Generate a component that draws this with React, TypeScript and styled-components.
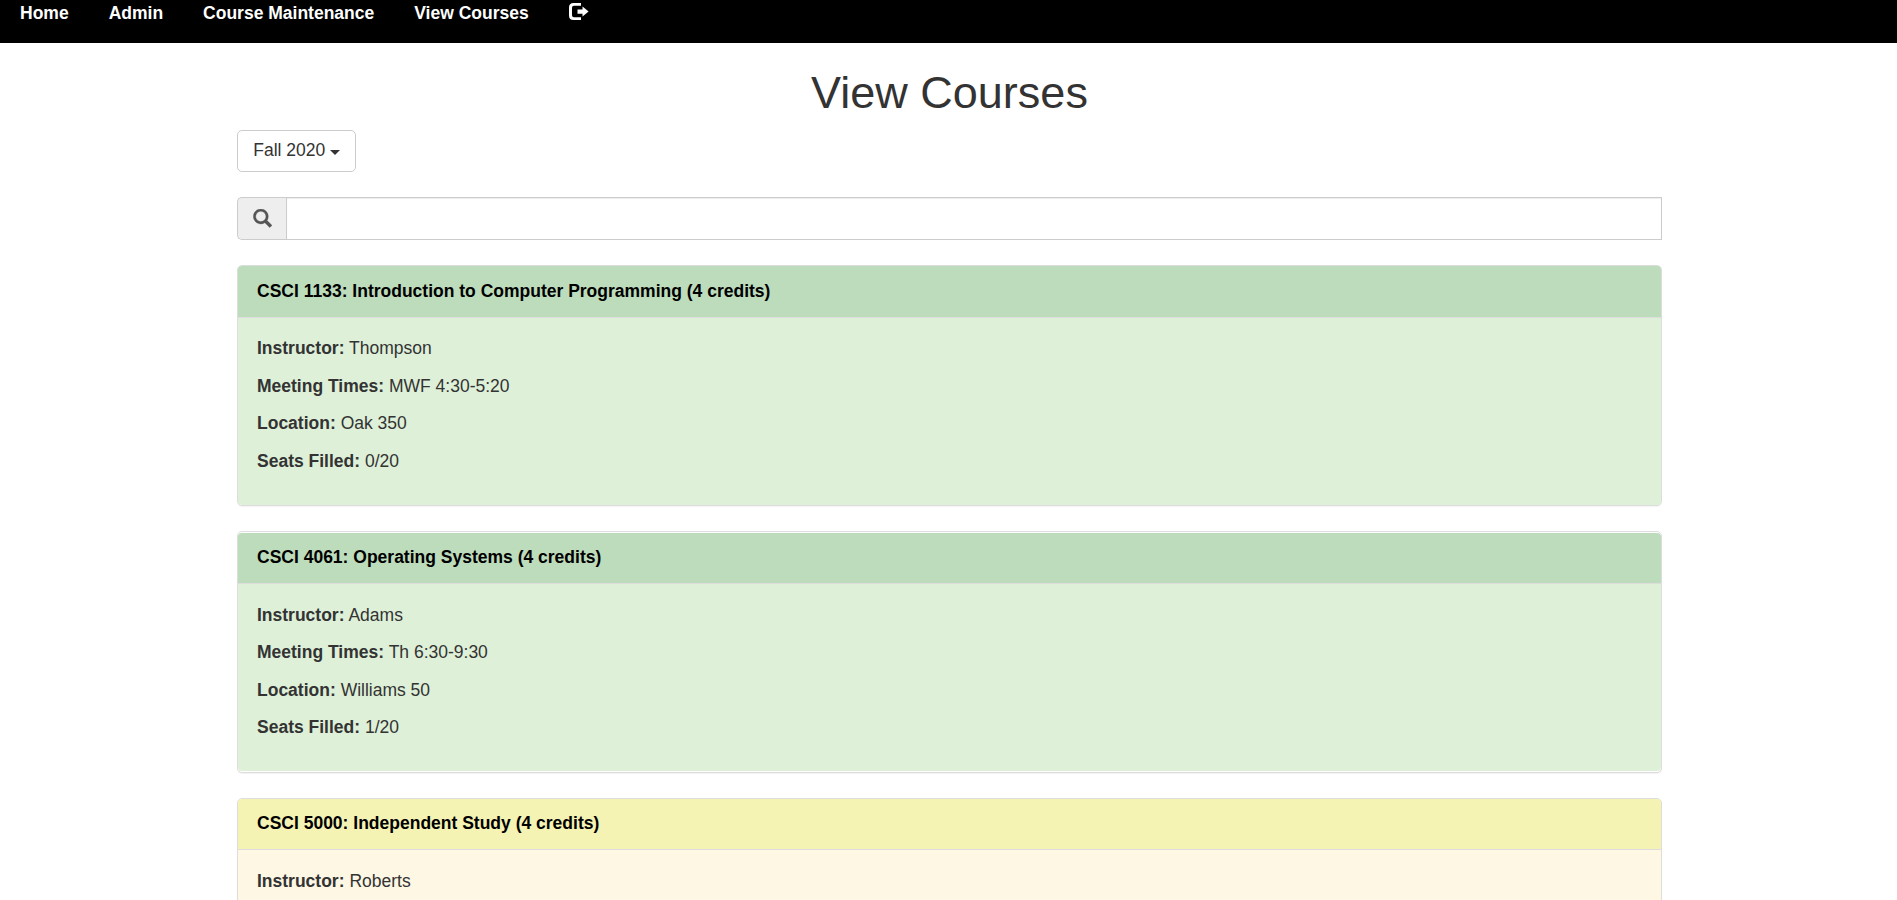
import React from "react";
import styled, { createGlobalStyle } from "styled-components";

type Tone = "open" | "warning";

const tones = {
  open: { heading: "#bcdcbb", body: "#def0d8" },
  warning: { heading: "#f4f3b4", body: "#fdf7e3" },
};

const GlobalStyle = createGlobalStyle`
  *, *::before, *::after { box-sizing: border-box; }
  html { overflow: hidden; }
  body {
    margin: 0;
    background: #fff;
    color: #333;
    font-family: "Liberation Sans", Arial, sans-serif;
    font-size: 17.5px;
    line-height: 25px;
  }
`;

const Page = styled.div`
  height: 900px;
  overflow: hidden;
`;

const Navbar = styled.nav`
  display: flex;
  align-items: flex-start;
  height: 43px;
  padding-top: 1px;
  background: #000;
`;

const NavLink = styled.a`
  display: flex;
  padding: 0 20px;
  height: 25px;
  color: #fff;
  font-weight: bold;
  text-decoration: none;
`;

const NavIcon = styled.svg`
  width: 20px;
  height: 17px;
  margin-top: 2px;
  fill: #fff;
`;

const Container = styled.main`
  width: 1425px;
  margin: 0 auto 0 236.75px;
`;

const Title = styled.h1`
  margin: 0;
  padding: 25px 0 12.5px 0.5px;
  font-size: 45px;
  font-weight: 500;
  line-height: 49.5px;
  text-align: center;
`;

const TermButton = styled.button`
  display: flex;
  align-items: center;
  gap: 4.5px;
  height: 42px;
  padding: 0 15px 1px 15.5px;
  border: 1px solid #ccc;
  border-radius: 5px;
  background: #fff;
  color: #333;
  font: inherit;
`;

const Caret = styled.span`
  margin-top: 3px;
  border-top: 5px solid #333;
  border-left: 5px solid transparent;
  border-right: 5px solid transparent;
`;

const SearchGroup = styled.div`
  display: flex;
  height: 43px;
  margin: 25px 0;
`;

const SearchAddon = styled.span`
  display: flex;
  align-items: center;
  justify-content: center;
  width: 49px;
  border: 1px solid #ccc;
  border-right: 0;
  border-radius: 5px 0 0 5px;
  background: #eee;
`;

const SearchIcon = styled.svg`
  width: 18.5px;
  height: 18.5px;
  margin-left: 1px;
  fill: #555;
  stroke: #555;
  stroke-width: 22;
`;

const SearchInput = styled.input`
  flex: 1;
  min-width: 0;
  padding: 7.5px 15px;
  border: 1px solid #ccc;
  border-radius: 0;
  box-shadow: inset 0 1px 1px rgba(0, 0, 0, 0.075);
  font: inherit;
  outline: none;
`;

const Panel = styled.section`
  margin-bottom: 25px;
  padding: 0.25px 0;
  border: 1px solid #ddd;
  border-radius: 5px;
  background: #fff;
  box-shadow: 0 1px 1px rgba(0, 0, 0, 0.05);
`;

const PanelHeading = styled.header<{ $tone: Tone }>`
  height: 51.25px;
  padding: 12.5px 19.25px;
  border-bottom: 1px solid #ddd;
  border-radius: 4px 4px 0 0;
  background: ${({ $tone }) => tones[$tone].heading};
  color: #000;
  font-weight: bold;
`;

const PanelBody = styled.div<{ $tone: Tone }>`
  padding: 18.75px 19.25px;
  border-radius: 0 0 4px 4px;
  background: ${({ $tone }) => tones[$tone].body};
`;

const Detail = styled.p`
  margin: 0;
  padding-bottom: 12.5px;
`;

const courses: { title: string; tone: Tone; details: [string, string][] }[] = [
  {
    title: "CSCI 1133: Introduction to Computer Programming (4 credits)",
    tone: "open",
    details: [
      ["Instructor", "Thompson"],
      ["Meeting Times", "MWF 4:30-5:20"],
      ["Location", "Oak 350"],
      ["Seats Filled", "0/20"],
    ],
  },
  {
    title: "CSCI 4061: Operating Systems (4 credits)",
    tone: "open",
    details: [
      ["Instructor", "Adams"],
      ["Meeting Times", "Th 6:30-9:30"],
      ["Location", "Williams 50"],
      ["Seats Filled", "1/20"],
    ],
  },
  {
    title: "CSCI 5000: Independent Study (4 credits)",
    tone: "warning",
    details: [["Instructor", "Roberts"]],
  },
];

export default function App() {
  return (
    <Page>
      <GlobalStyle />
      <Navbar>
        <NavLink>Home</NavLink>
        <NavLink>Admin</NavLink>
        <NavLink>Course Maintenance</NavLink>
        <NavLink>View Courses</NavLink>
        <NavLink aria-label="Log out">
          <NavIcon viewBox="0 0 20 17">
            <path d="M12 0H4.5Q0 0 0 4.5V12.5Q0 17 4.5 17H12V14.2H5Q3 14.2 3 12.2V4.8Q3 2.8 5 2.8H12Z" />
            <path d="M13.5 3.6L19.6 8.6L13.5 13.6V10.8H8.5V6.4H13.5Z" />
          </NavIcon>
        </NavLink>
      </Navbar>
      <Container>
        <Title>View Courses</Title>
        <TermButton>
          Fall 2020 <Caret />
        </TermButton>
        <SearchGroup>
          <SearchAddon>
            <SearchIcon viewBox="0 0 1200 1200">
              <path
                transform="translate(0 1177) scale(1 -1)"
                d="M507 1177q98 0 187.5 -38.5t154.5 -103.5t103.5 -154.5t38.5 -187.5q0 -141 -78 -262l300 -299q8 -8 8 -18.5t-8 -18.5l-109 -108q-7 -8 -17.5 -8t-18.5 8l-300 299q-119 -77 -261 -77q-98 0 -188 38.5t-154.5 103t-103 154.5t-38.5 188t38.5 187.5t103 154.5t154.5 103.5t188 38.5zM506.5 1023q-89.5 0 -165.5 -44t-120 -120.5t-44 -166t44 -165.5t120 -120t165.5 -44t166 44t120.5 120t44 165.5t-44 166t-120.5 120.5t-166 44z"
              />
            </SearchIcon>
          </SearchAddon>
          <SearchInput aria-label="Search courses" />
        </SearchGroup>
        {courses.map((course) => (
          <Panel key={course.title}>
            <PanelHeading $tone={course.tone}>{course.title}</PanelHeading>
            <PanelBody $tone={course.tone}>
              {course.details.map(([label, value]) => (
                <Detail key={label}>
                  <b>{label}:</b> {value}
                </Detail>
              ))}
            </PanelBody>
          </Panel>
        ))}
      </Container>
    </Page>
  );
}
